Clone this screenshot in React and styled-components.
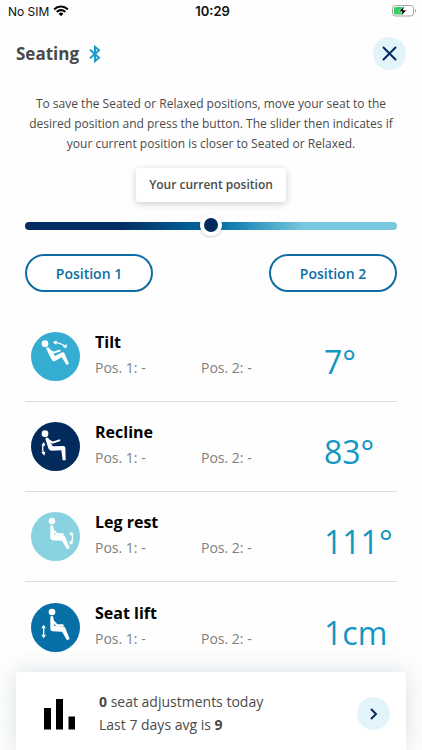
import { useState } from 'react';
import styled, { createGlobalStyle } from 'styled-components';

const GlobalStyle = createGlobalStyle`
  * {
    box-sizing: border-box;
  }

  body {
    margin: 0;
    background: #fefefe;
    color: #4a4a4a;
    font-family: 'Open Sans', 'Noto Sans', sans-serif;
  }

  button, input {
    font: inherit;
  }
`;

const Screen = styled.div`
  display: flex;
  flex-direction: column;
  min-height: 100vh;
`;

const StatusBar = styled.div`
  display: grid;
  grid-template-columns: 1fr auto 1fr;
  align-items: center;
  height: 22px;
  padding: 0 5px 0 8px;
  color: #111;
  font-family: Inter, 'Liberation Sans', sans-serif;
  font-size: 12px;
`;

const Carrier = styled.span`
  display: flex;
  align-items: center;
  gap: 4px;
`;

const Clock = styled.time`
  font-size: 13px;
  font-weight: 600;
`;

const BatterySlot = styled.span`
  display: flex;
  justify-content: flex-end;
`;

const Header = styled.header`
  display: flex;
  align-items: center;
  justify-content: space-between;
  padding: 15px 16px 0;
`;

const Title = styled.h1`
  display: flex;
  align-items: center;
  gap: 10px;
  margin: 0;
  font-size: 17px;
  font-weight: 700;
`;

const RoundButton = styled.button`
  display: flex;
  flex: none;
  align-items: center;
  justify-content: center;
  width: 33px;
  height: 33px;
  padding: 0;
  border: none;
  border-radius: 50%;
  background: #e2f3fa;
  color: #032a5c;
  cursor: pointer;
`;

const Content = styled.main`
  flex: 1;
  padding: 24px 25px 0;
`;

const Intro = styled.p`
  margin: 0;
  font-size: 12px;
  line-height: 20px;
  text-align: center;
`;

const SliderGroup = styled.div`
  display: flex;
  flex-direction: column;
  align-items: center;
  margin-top: 14px;
`;

const SliderLabel = styled.label`
  padding: 8px 13px;
  border-radius: 3px;
  background: #fff;
  box-shadow: 0 2px 7px rgba(0, 0, 0, 0.2);
  font-size: 12px;
  font-weight: 600;
  line-height: 18px;
`;

const Slider = styled.input`
  appearance: none;
  width: 100%;
  height: 24px;
  margin: 12px 0 0;
  background: transparent;

  &::-webkit-slider-runnable-track {
    height: 8px;
    border-radius: 4px;
    background: linear-gradient(90deg, #032d60 25%, #0470a8 52%, #78c9df 75%);
  }

  &::-webkit-slider-thumb {
    appearance: none;
    width: 22px;
    height: 22px;
    margin-top: -8px;
    border: 4px solid #fff;
    border-radius: 50%;
    background: #032a5c;
    box-shadow: 0 1px 3px rgba(0, 0, 0, 0.2);
  }
`;

const PositionButtons = styled.div`
  display: flex;
  justify-content: space-between;
  margin-top: 16px;
`;

const PositionButton = styled.button`
  width: 128px;
  height: 38px;
  padding: 0;
  border: 2px solid #0d6ca3;
  border-radius: 19px;
  background: #fff;
  color: #0d6ca3;
  font-size: 14px;
  font-weight: 600;
  cursor: pointer;
`;

const SettingList = styled.ul`
  margin: 20px 0 0;
  padding: 0;
  list-style: none;
`;

const SettingRow = styled.li`
  display: grid;
  grid-template-columns: 49px 91px 1fr 73px;
  align-items: center;
  column-gap: 15px;
  height: 90px;
  padding-left: 6px;
  border-bottom: 1px solid #dcdcdc;

  &:last-child {
    border-bottom: none;
  }
`;

const Badge = styled.span`
  width: 49px;
  height: 49px;
  border-radius: 50%;
  background: ${props => props.$color};
`;

const SettingText = styled.div`
  display: flex;
  flex-direction: column;
  gap: 4px;
  padding-bottom: 3px;
`;

const SettingName = styled.h2`
  margin: 0;
  color: #000;
  font-size: 16px;
  font-weight: 700;
  line-height: 22px;
  white-space: nowrap;
`;

const SavedPosition = styled.span`
  color: #808080;
  font-size: 14px;
  line-height: 22px;
`;

const SecondPosition = styled(SavedPosition)`
  padding-top: 23px;
`;

const Value = styled.output`
  padding-top: 11px;
  color: #1496c2;
  font-size: 32px;
  line-height: 40px;
  white-space: nowrap;
`;

const Summary = styled.footer`
  position: sticky;
  bottom: 0;
  display: flex;
  align-items: center;
  gap: 24px;
  margin: 0 16px;
  padding: 15px 16px 11px 27px;
  border-radius: 4px 4px 0 0;
  background: #fff;
  box-shadow: 0 0 24px rgba(20, 60, 90, 0.16);
`;

const SummaryText = styled.p`
  flex: 1;
  margin: 0;
  padding: 3px 0 4px;
  font-size: 14px;
  line-height: 23px;
`;

const WifiIcon = () => (
  <svg width="16" height="12" viewBox="0 0 16 12" fill="#000" aria-hidden="true">
    <path d="M8 2.6c2.3 0 4.4.9 5.9 2.4.1.1.3.1.4 0l1.1-1.2c.1-.1.1-.3 0-.4A10.6 10.6 0 0 0 .6 3.4c-.1.1-.1.3 0 .4L1.7 5c.1.1.3.1.4 0A8.5 8.5 0 0 1 8 2.6Z" />
    <path d="M8 6.3c1.3 0 2.4.5 3.3 1.3.1.1.3.1.4 0l1.1-1.2c.1-.1.1-.3 0-.4a7 7 0 0 0-9.6 0c-.1.1-.1.3 0 .4l1.1 1.2c.1.1.3.1.4 0A4.9 4.9 0 0 1 8 6.3Z" />
    <path d="M10.2 8.9c.1-.1.1-.3 0-.4a3.5 3.5 0 0 0-4.4 0c-.1.1-.1.3 0 .4L7.8 11c.1.1.3.1.4 0Z" />
  </svg>
);

const BatteryIcon = () => (
  <svg width="26" height="14" viewBox="0 0 26 14" role="img" aria-label="Battery charging">
    <rect x="1.5" y="1.5" width="21" height="10.5" rx="3" fill="#fff" stroke="#a3a3a3" />
    <path d="M4.5 3H12v7.5H4.5A1.5 1.5 0 0 1 3 9V4.500A1.5 1.5 0 0 1 4.500 3Z" fill="#37cf61" />
    <path d="M24 5v3.600c.8-.3 1.200-1 1.200-1.800S24.800 5.300 24 5Z" fill="#a3a3a3" />
    <path d="M13.400 1.500 7.800 7.700h3.400l-1.300 4.700 5.800-6.300h-3.500Z" fill="#000" stroke="#fff" strokeWidth="0.6" />
  </svg>
);

const BluetoothIcon = () => (
  <svg width="12" height="18" viewBox="0 0 12 18" fill="none" stroke="#1b9cc9" strokeWidth="2" aria-hidden="true">
    <path d="M1 4.700 10 12.800l-4 3.300V1.900l4 3.300-9 8.100" />
  </svg>
);

const CloseIcon = () => (
  <svg width="15" height="15" viewBox="0 0 15 15" fill="none" stroke="currentColor" strokeWidth="2" strokeLinecap="round" aria-hidden="true">
    <path d="m1.5 1.5 12 12m0-12-12 12" />
  </svg>
);

const ChevronIcon = () => (
  <svg width="8" height="12" viewBox="0 0 8 12" fill="none" stroke="currentColor" strokeWidth="2" aria-hidden="true">
    <path d="m1 1 5 5-5 5" />
  </svg>
);

const BarsIcon = () => (
  <svg width="32" height="32" viewBox="0 0 32 32" fill="#000" aria-hidden="true">
    <path d="M1 10h7v21.500H1zM13 1h7v30.500h-7zM25.500 18.500H32v13h-6.500z" />
  </svg>
);

const uprightFigure = {
  head: [63, 27],
  torso: 'M58 41q5-4 9 1l3 27 26 1q5 0 7 5l13 33-8 4-15-26-29-1q-6-1-6-7Z',
  arm: 'm66 54 11 12 18 1',
};

const drawings = {
  tilt: {
    head: [42, 35],
    torso: 'M45 49q4-6 9-2l18 25 22-11q4-1 6 2l14 32-7 4-15-23-20 11q-6 2-10-4Z',
    arm: 'm54 54 14 8 18-6',
    arrow: 'M69 32q22 0 35 13',
    tips: 'm77 25-11 6 10 8ZM108 36l-2 13-11-4Z',
  },
  recline: {
    head: [42, 35],
    torso: 'M43 50q4-6 9-2l13 25 32-1q5 1 6 5l1 38h-9l-4-30-29 1q-8 0-10-7Z',
    arm: 'm52 54 13 8 20-7',
    arrow: 'M38 65q-6 14 0 30',
    tips: 'm31 70 8-10 4 11ZM31 91l9 10 3-12Z',
  },
  legRest: {
    ...uprightFigure,
    arrow: 'M121 64q8 14-1 28',
    tips: 'm115 70 4-11 10 8ZM115 86l2 12 11-6Z',
  },
  seatLift: {
    ...uprightFigure,
    arrow: 'M38 72v28',
    tips: 'm31 76 7-11 7 11ZM31 95l7 11 7-11Z',
  },
};

function SeatIcon({ type }) {
  const { head, torso, arm, arrow, tips } = drawings[type];

  return (
    <svg width="49" height="49" viewBox="0 0 147 147" fill="#fff" aria-hidden="true">
      <circle cx={head[0]} cy={head[1]} r="10" />
      <path d={torso} />
      <path d={arm} fill="none" stroke="#fff" strokeWidth="6" strokeLinecap="round" strokeLinejoin="round" />
      <path d={arrow} fill="none" stroke="#fff" strokeWidth="4" />
      <path d={tips} />
    </svg>
  );
}

const settings = [
  { type: 'tilt', name: 'Tilt', value: '7°', color: '#35add3' },
  { type: 'recline', name: 'Recline', value: '83°', color: '#032a5c' },
  { type: 'legRest', name: 'Leg rest', value: '111°', color: '#89d3e1' },
  { type: 'seatLift', name: 'Seat lift', value: '1cm', color: '#0770a7' },
];

function App() {
  const [position, setPosition] = useState(50);

  return (
    <Screen>
      <GlobalStyle />
      <StatusBar>
        <Carrier>No SIM <WifiIcon /></Carrier>
        <Clock>10:29</Clock>
        <BatterySlot><BatteryIcon /></BatterySlot>
      </StatusBar>

      <Header>
        <Title>Seating <BluetoothIcon /></Title>
        <RoundButton type="button" aria-label="Close">
          <CloseIcon />
        </RoundButton>
      </Header>

      <Content>
        <Intro>
          To save the Seated or Relaxed positions, move your seat to the
          desired position and press the button. The slider then indicates if
          your current position is closer to Seated or Relaxed.
        </Intro>

        <SliderGroup>
          <SliderLabel htmlFor="position">Your current position</SliderLabel>
          <Slider
            id="position"
            type="range"
            min="0"
            max="100"
            value={position}
            onChange={e => setPosition(Number(e.target.value))}
          />
        </SliderGroup>

        <PositionButtons>
          <PositionButton type="button">Position 1</PositionButton>
          <PositionButton type="button">Position 2</PositionButton>
        </PositionButtons>

        <SettingList>
          {settings.map(item => (
            <SettingRow key={item.type}>
              <Badge $color={item.color}>
                <SeatIcon type={item.type} />
              </Badge>
              <SettingText>
                <SettingName>{item.name}</SettingName>
                <SavedPosition>Pos. 1: -</SavedPosition>
              </SettingText>
              <SecondPosition>Pos. 2: -</SecondPosition>
              <Value>{item.value}</Value>
            </SettingRow>
          ))}
        </SettingList>
      </Content>

      <Summary>
        <BarsIcon />
        <SummaryText>
          <strong>0</strong> seat adjustments today
          <br />
          Last 7 days avg is <strong>9</strong>
        </SummaryText>
        <RoundButton type="button" aria-label="Show seat adjustments">
          <ChevronIcon />
        </RoundButton>
      </Summary>
    </Screen>
  );
}

export default App;
